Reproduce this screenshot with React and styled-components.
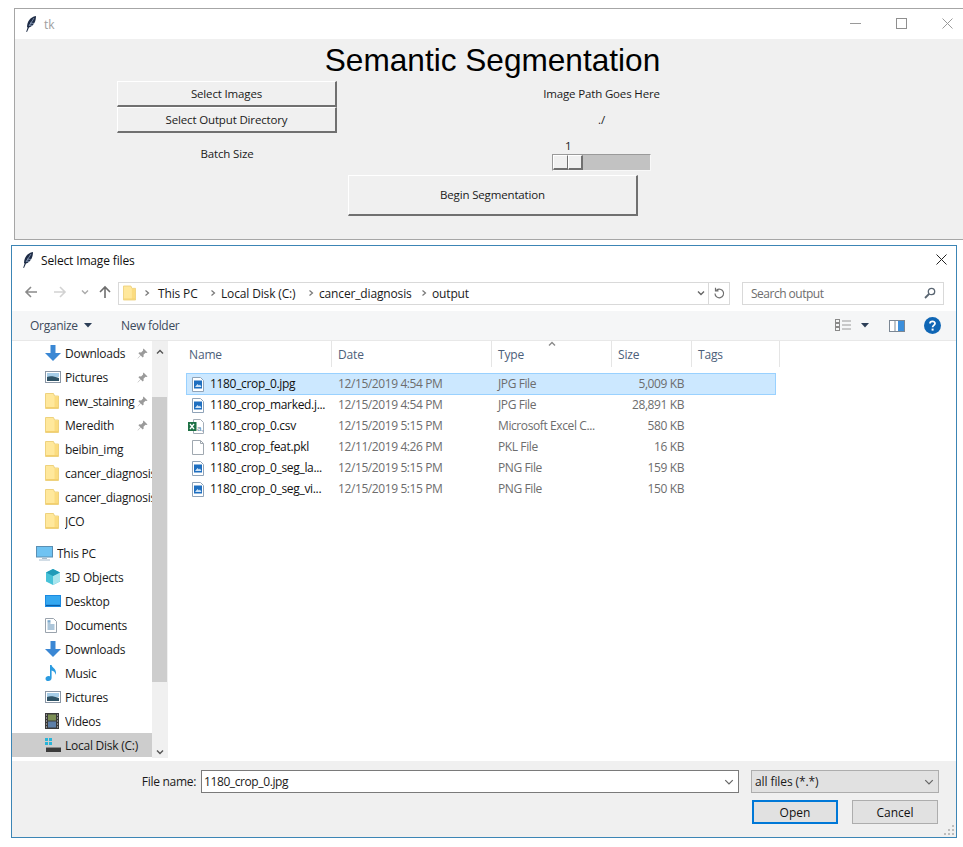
import React from "react";
import styled, { createGlobalStyle } from "styled-components";

const Global = createGlobalStyle`
  html, body { margin: 0; padding: 0; background: #fff; }
  body { width: 963px; height: 847px; overflow: hidden; font-family: "Open Sans", "Noto Sans", sans-serif; font-size: 12px; color: #1a1a1a; }
  * { box-sizing: border-box; }
`;

const Page = styled.div`
  width: 963px; height: 847px; padding-top: 8px; overflow: hidden; display: flex; flex-direction: column;
`;

/* ---------- Tk window ---------- */
const TkWindow = styled.section`
  margin-left: 14px; width: 949px; height: 232px; flex: none;
  border: 1px solid #a6a6a6; border-right: none; background: #f0f0f0; display: flex; flex-direction: column;
`;
const TkTitleBar = styled.header`
  height: 30px; background: #fff; display: flex; align-items: center; padding-left: 10px; flex: none;
`;
const TkTitleText = styled.span`
  margin-left: 7px; color: #a0a0a0; font-size: 12px;
`;
const WinButtons = styled.div`
  margin-left: auto; display: flex; align-items: center; gap: 35px; padding-right: ${(p) => p.$right}px; padding-bottom: 1px;
`;
const Heading = styled.h1`
  margin: 0; height: 42px; padding-left: 7px; flex: none; display: flex; align-items: center; justify-content: center;
  font: 400 31.6px "Liberation Sans", Arial, sans-serif; color: #000;
`;
const TkGrid = styled.div`
  display: grid; margin-left: 102px; grid-template-columns: 220px 215px 99px; grid-template-rows: 26px 26px 42px 41px;
`;
const TkButton = styled.button`
  appearance: none; margin: 0; padding: 0 0 1px; font: inherit; font-size: 11.5px; letter-spacing: -0.15px; color: #1a1a1a; background: #f0f0f0;
  border-style: solid; border-color: #fff #707070 #707070 #fff; border-width: 1px 2px 2px 1px;
  grid-column: ${(p) => p.$col || "1"}; grid-row: ${(p) => p.$row || "auto"};
  margin-left: ${(p) => p.$ml || "0"}; margin-right: ${(p) => p.$mr || "0"};
`;
const TkLabel = styled.div`
  grid-column: ${(p) => p.$col}; grid-row: ${(p) => p.$row}; justify-self: center; align-self: center; white-space: nowrap; font-size: 11.5px; letter-spacing: -0.15px; margin-bottom: 2px;
`;
const ScaleWrap = styled.div`
  grid-column: 3; grid-row: 3; align-self: end; padding-bottom: 4px; display: flex; flex-direction: column;
`;
const ScaleValue = styled.div`
  padding-left: 13px; line-height: 14px; height: 15px; font-size: 11.5px;
`;
const Trough = styled.div`
  height: 17px; background: #c2c2c2; border: 1px solid #f8f8f8; border-left-color: #9a9a9a; border-top-color: #9a9a9a; display: flex;
`;
const Thumb = styled.div`
  width: 15px; background: #f0f0f0; border-style: solid; border-color: #fff #707070 #707070 #fff; border-width: 1px 1px 2px 1px;
  &:last-child { border-right-width: 2px; }
`;

/* ---------- File dialog ---------- */
const Dialog = styled.section`
  margin: 5px 0 0 11px; width: 946px; height: 593px; flex: none; border: 1px solid #3c85b5; background: #fff;
  display: flex; flex-direction: column; position: relative;
`;
const DlgTitleBar = styled.header`
  height: 30px; flex: none; display: flex; align-items: center; padding: 0 0 2px 10px; color: #111;
`;
const DlgTitle = styled.span`
  margin-left: 7px; font-size: 12px; letter-spacing: -0.15px;
`;
const NavRow = styled.div`
  height: 35px; flex: none; display: flex; align-items: center; padding: 0 12px 1px 0;
`;
const NavIcons = styled.div`
  width: 106px; height: 22px; flex: none; display: flex; align-items: center; position: relative;
`;
const NavSlot = styled.span`
  position: absolute; left: ${(p) => p.$x}px; top: ${(p) => p.$y ?? 3}px; display: flex;
`;
const AddressBox = styled.div`
  width: 612px; height: 23px; border: 1px solid #d9d9d9; display: flex; align-items: center; flex: none;
`;
const Crumbs = styled.div`
  flex: 1; display: flex; align-items: center; padding-left: 4px; color: #1a1a1a; font-size: 12px; letter-spacing: -0.15px;
`;
const Crumb = styled.span`
  white-space: nowrap; width: ${(p) => p.$w}px;
`;
const Chev = styled.span`
  display: flex; width: ${(p) => p.$w || 16}px; justify-content: center; flex: none;
`;
const RefreshCell = styled.div`
  width: 21px; height: 100%; border-left: 1px solid #d9d9d9; display: flex; align-items: center; justify-content: center; flex: none;
`;
const SearchBox = styled.div`
  margin-left: 12px; width: 202px; height: 23px; border: 1px solid #d9d9d9; display: flex; align-items: center; justify-content: space-between;
  padding: 0 7px 0 8px; color: #6d6d6d; font-size: 12px; flex: none; letter-spacing: -0.5px;
`;
const Toolbar = styled.div`
  height: 30px; flex: none; background: #f5f6f7; border-bottom: 1px solid #e8e8e8; display: flex; align-items: center; padding: 0 15px 0 18px; color: #3c4a5c; font-size: 12px; letter-spacing: -0.3px;
`;
const ToolItem = styled.span`
  display: flex; align-items: center; gap: 6px; width: ${(p) => p.$w}px; flex: none; white-space: nowrap;
`;
const ToolRight = styled.div`
  margin-left: auto; display: flex; align-items: center;
`;
const ViewCaret = styled.span`
  width: 25px; display: flex; justify-content: center;
`;
const PreviewSlot = styled.span`
  margin: 0 19px 0 12px; display: flex;
`;
const Panes = styled.div`
  flex: 1; min-height: 0; display: flex;
`;
const Sidebar = styled.nav`
  width: 140px; flex: none; display: flex; flex-direction: column; overflow: hidden;
`;
const SideItem = styled.div`
  height: 24px; flex: none; display: flex; align-items: center; width: 140px; white-space: nowrap;
  padding-left: ${(p) => (p.$root ? 24 : 33)}px;
  margin-top: ${(p) => (p.$root ? 8 : 0)}px;
  background: ${(p) => (p.$active ? "#cdcdcd" : "transparent")};
  font-size: 12px; letter-spacing: -0.25px;
`;
const SideIcon = styled.span`
  width: ${(p) => (p.$root ? 21 : 20)}px; flex: none; display: flex; align-items: center;
`;
const SideLabel = styled.span`
  flex: 1; min-width: 0; overflow: hidden; color: #1a1a1a;
`;
const Pin = styled.span`
  flex: none; display: flex; margin-right: 4px; margin-left: 2px;
`;
const ScrollBar = styled.div`
  width: 16px; flex: none; background: #f0f0f0; height: 417px; display: flex; flex-direction: column; align-items: center;
`;
const ScrollArrow = styled.div`
  height: 17px; width: 100%; display: flex; align-items: center; justify-content: center; flex: none;
  padding-top: ${(p) => p.$pad || 0}px;
`;
const ScrollSpace = styled.div`
  height: ${(p) => p.$h}px; flex: none;
`;
const ScrollThumb = styled.div`
  width: 15px; height: 285px; background: #cdcdcd; flex: none; align-self: flex-start;
`;
const FileArea = styled.div`
  flex: 1; min-width: 0; display: flex; flex-direction: column; padding-left: 18px; position: relative;
`;
const HeaderRow = styled.div`
  height: 30px; flex: none; display: flex; color: #4c607a; font-size: 12px; letter-spacing: -0.15px;
`;
const HeaderCell = styled.div`
  width: ${(p) => p.$w}px; flex: none; padding: 1px 0 0 ${(p) => p.$pad || 6}px; border-right: 1px solid #e5e5e5; height: 26px; display: flex; align-items: center;
`;
const SortCaret = styled.span`
  position: absolute; left: 380px; top: -1px; display: flex;
`;
const Rows = styled.div`
  display: flex; flex-direction: column; margin-top: 2px;
`;
const FileRow = styled.div`
  height: 21px; width: 590px; flex: none; display: flex; align-items: center; font-size: 12px;
  border: 1px solid ${(p) => (p.$sel ? "#99d1ff" : "transparent")}; background: ${(p) => (p.$sel ? "#cce8ff" : "transparent")};
  &:first-child { height: 22px; }
`;
const FileIcon = styled.span`
  width: 23px; padding-left: ${(p) => p.$pad ?? 5}px; flex: none; display: flex;
`;
const FileName = styled.span`
  width: 128px; flex: none; color: #111; white-space: nowrap; letter-spacing: -0.32px; padding-bottom: 2px;
`;
const FileMeta = styled.span`
  width: ${(p) => p.$w}px; flex: none; color: #6d6d6d; white-space: nowrap; letter-spacing: -0.4px; padding-bottom: 2px; text-align: ${(p) => (p.$right ? "right" : "left")};
`;
const Footer = styled.footer`
  height: 76px; flex: none; background: #f0f0f0; position: relative; padding: 9px 17px 0 0; display: flex; flex-direction: column; margin-top: 3px;
`;
const FootRow = styled.div`
  display: flex; align-items: center; justify-content: flex-end;
`;
const FieldLabel = styled.label`
  margin-right: 5px; font-size: 12px; letter-spacing: -0.3px;
`;
const NameField = styled.div`
  width: 538px; height: 23px; background: #fff; border: 1px solid #7a7a7a; display: flex; align-items: center; justify-content: space-between; padding: 0 4px 0 1px; font-size: 12px; letter-spacing: -0.4px;
  span { padding-left: 1px; }
`;
const FilterField = styled.div`
  margin-left: 12px; width: 188px; height: 23px; background: #e1e1e1; border: 1px solid #adadad; display: flex; align-items: center; justify-content: space-between; padding: 0 4px 0 3px; font-size: 12px; letter-spacing: -0.1px;
`;
const Buttons = styled.div`
  display: flex; justify-content: flex-end; gap: 14px; margin-top: 7px; padding-right: 1px;
`;
const DlgButton = styled.button`
  appearance: none; margin: 0; padding: 0; width: 86px; height: 24px; font: inherit; font-size: 12px; color: #111; background: #e1e1e1;
  border: ${(p) => (p.$primary ? "2px solid #0078d7" : "1px solid #adadad")};
`;
const Grip = styled.span`
  position: absolute; right: 2px; bottom: 2px; display: flex;
`;
const NavDrop = styled.span`
  padding-top: 3px; display: flex;
`;

/* ---------- Icons ---------- */
const Feather = () => (
  <svg width="12" height="18" viewBox="0 0 12 18">
    <path d="M2 12C2 7 5 2 11 1c0 5-2 10-7 11.5L2 17l-.8-.3L2.6 12.5" fill="#1e2c46" />
    <path d="M4 11 9 3M5 8l4 .5M4.5 10l3 .5" stroke="#9fb2d0" strokeWidth=".7" fill="none" />
  </svg>
);
const MinIcon = () => (
  <svg width="11" height="11" viewBox="0 0 11 11"><path d="M0 5.5h11" stroke="#9a9a9a" /></svg>
);
const MaxIcon = () => (
  <svg width="11" height="11" viewBox="0 0 11 11"><rect x=".5" y=".5" width="10" height="10" fill="none" stroke="#8f8f8f" /></svg>
);
const CloseIcon = ({ c = "#9a9a9a", w = 1 }) => (
  <svg width="11" height="11" viewBox="0 0 11 11"><path d="M.5.5l10 10M10.5.5l-10 10" stroke={c} strokeWidth={w} /></svg>
);
const ArrowL = ({ c }) => (
  <svg width="14" height="14" viewBox="0 0 14 14"><path d="M13 7H2M7 2 2 7l5 5" stroke={c} strokeWidth="1.6" fill="none" /></svg>
);
const ArrowR = ({ c }) => (
  <svg width="14" height="14" viewBox="0 0 14 14"><path d="M1 7h11M7 2l5 5-5 5" stroke={c} strokeWidth="1.6" fill="none" /></svg>
);
const ArrowU = ({ c }) => (
  <svg width="14" height="14" viewBox="0 0 14 14"><path d="M7 13V2M2 7l5-5 5 5" stroke={c} strokeWidth="1.6" fill="none" /></svg>
);
const ChevDown = ({ c = "#777", s = 8, w = 1.4 }) => (
  <svg width={s} height={s} viewBox="0 0 8 8"><path d="M1 2.5 4 5.5l3-3" stroke={c} strokeWidth={w} fill="none" /></svg>
);
const ChevUp = ({ c = "#555" }) => (
  <svg width="8" height="8" viewBox="0 0 8 8"><path d="M1 5.5 4 2.5l3 3" stroke={c} strokeWidth="1.4" fill="none" /></svg>
);
const ChevRight = () => (
  <svg width="6" height="8" viewBox="0 0 6 8"><path d="M1.500 1.500 4.500 4l-3 2.500" stroke="#777" strokeWidth="1.2" fill="none" /></svg>
);
const Caret = () => (
  <svg width="8" height="5" viewBox="0 0 8 5"><path d="M0 0h8L4 4.500z" fill="#2c3e57" /></svg>
);
const Refresh = () => (
  <svg width="12" height="13" viewBox="0 0 12 13"><path d="M3.500 3.200A4.300 4.300 0 1 1 2 6.500M2.500.8v3h3" stroke="#6e6e6e" strokeWidth="1.2" fill="none" /></svg>
);
const Search = () => (
  <svg width="12" height="12" viewBox="0 0 12 12"><circle cx="7.500" cy="4.500" r="3.200" stroke="#5a6672" strokeWidth="1.3" fill="none" /><path d="M5 7 1 11" stroke="#5a6672" strokeWidth="1.8" /></svg>
);
const Folder = ({ s = 14 }) => (
  <svg width={s} height="16" viewBox="0 0 14 16">
    <path d="M.5.5h8l1 2.500h4v12.500H.5z" fill="#ffe89c" stroke="#eed27e" />
    <path d="M9.500 3.500h3.500v11.500H9.500z" fill="#fbdc80" />
    <path d="M1 14.500h12" stroke="#f3cf6e" />
  </svg>
);
const ViewsIcon = () => (
  <svg width="17" height="13" viewBox="0 0 17 13">
    <g fill="none" stroke="#8a8a8a"><rect x=".5" y=".5" width="4" height="3" /><rect x=".5" y="4.500" width="4" height="3" /><rect x=".5" y="8.500" width="4" height="3" /></g>
    <path d="M7 2h9M7 6h9M7 10h9" stroke="#9a9a9a" />
  </svg>
);
const PreviewIcon = () => (
  <svg width="16" height="12" viewBox="0 0 16 12">
    <rect x=".5" y=".5" width="15" height="11" fill="#fff" stroke="#7b8794" />
    <rect x="9" y="1" width="6" height="10" fill="#3c8fdc" />
    <path d="M6 1v10" stroke="#7b8794" />
  </svg>
);
const Help = () => (
  <svg width="17" height="17" viewBox="0 0 17 17">
    <circle cx="8.500" cy="8.500" r="8.500" fill="#0f66b5" />
    <path d="M6 6.600C6 3.600 11 3.600 11 6.500 11 8.400 8.600 8.400 8.600 10.200" stroke="#fff" strokeWidth="1.8" fill="none" />
    <rect x="7.600" y="11.600" width="2" height="2" fill="#fff" />
  </svg>
);
const PinIcon = () => (
  <svg width="11" height="11" viewBox="0 0 11 11">
    <path d="M6.500.5l4 4-1 .5-1-.2-2 2 .2 1.700-1 1-2-2L.8 10.400l-.2-.2 2.800-2.900-2-2 1-1 1.700.2 2-2-.1-1z" fill="#9a9a9a" />
  </svg>
);
const DownloadIcon = () => (
  <svg width="16" height="16" viewBox="0 0 16 16"><path d="M5.500 0h5v8H16l-8 8-8-8h5.500z" fill="#3a87d4" /></svg>
);
const PicturesIcon = () => (
  <svg width="16" height="12" viewBox="0 0 16 12">
    <rect x=".5" y=".5" width="15" height="11" fill="#fff" stroke="#8b97a6" />
    <rect x="2" y="2" width="12" height="4" fill="#a6cde8" />
    <path d="M2 6c3-1 6-1 12 1v3H2z" fill="#2f5366" />
  </svg>
);
const MonitorIcon = () => (
  <svg width="17" height="15" viewBox="0 0 17 15">
    <rect x=".5" y=".5" width="16" height="10.500" fill="#6fc3f2" stroke="#5a8fb3" />
    <path d="M6 12h5v1H6zM3 13.500h11v1H3z" fill="#a5bccd" />
  </svg>
);
const CubeIcon = () => (
  <svg width="16" height="16" viewBox="0 0 16 16">
    <path d="M8 0l7 3.500v9L8 16l-7-3.500v-9z" fill="#47c2d8" />
    <path d="M8 7l7-3.500v9L8 16z" fill="#a8e5ee" />
    <path d="M8 0l7 3.500L8 7 1 3.500z" fill="#1f9ab8" />
  </svg>
);
const DesktopIcon = () => (
  <svg width="16" height="12" viewBox="0 0 16 12">
    <rect width="16" height="12" fill="#1c8ae0" />
    <rect x="1" y="1" width="14" height="8.500" fill="#35a8f0" />
    <path d="M1 10.500h14" stroke="#0b5ea6" />
  </svg>
);
const DocsIcon = () => (
  <svg width="12" height="15" viewBox="0 0 12 15">
    <path d="M.5.5h8l3 3v11H.5z" fill="#fff" stroke="#9aa3ad" />
    <path d="M2.500 5h3M2.500 7h7M2.500 9h7M2.500 11h7" stroke="#5b8db5" />
    <rect x="2.500" y="2.200" width="3" height="2" fill="#7aa9cc" />
  </svg>
);
const MusicIcon = () => (
  <svg width="12" height="16" viewBox="0 0 12 16">
    <path d="M5 0h1.600c.3 2.500 4.400 3.600 4.400 7.500 0 .8-.2 1.600-.6 2.300.1-2.600-2-3.600-3.800-4.200V13c0 1.800-1.500 3-3.300 3C1.700 16 .5 15.100.5 13.700c0-1.600 1.500-2.700 3-2.700.6 0 1.100.1 1.500.4z" fill="#2b9be0" />
  </svg>
);
const VideoIcon = () => (
  <svg width="14" height="16" viewBox="0 0 14 16">
    <rect width="14" height="16" fill="#3a3a3a" />
    <rect x="3" y="1.500" width="8" height="6" fill="#7c8f55" />
    <rect x="3" y="8.500" width="8" height="6" fill="#5d7fa8" />
    <path d="M1 2h1M1 5h1M1 8h1M1 11h1M1 14h1M12 2h1M12 5h1M12 8h1M12 11h1M12 14h1" stroke="#ddd" />
  </svg>
);
const DiskIcon = () => (
  <svg width="16" height="15" viewBox="0 0 16 15">
    <path d="M0 0h3v3H0zM4 0h3v3H4zM0 4h3v3H0zM4 4h3v3H4z" fill="#28b4d8" />
    <rect x="1" y="10" width="15" height="4" fill="#3b3b3b" />
    <rect x="1" y="9" width="15" height="1" fill="#8a8a8a" />
  </svg>
);
const ImgFile = () => (
  <svg width="12" height="15" viewBox="0 0 12 15">
    <path d="M.5.5h8l3 3v11H.5z" fill="#fff" stroke="#8fa3b8" />
    <rect x="2" y="3.500" width="8" height="8" fill="#1f6fc0" />
    <path d="M3 10l2.500-3 1.500 1.500L8 7.500l1.500 2.500z" fill="#cfe4f7" />
  </svg>
);
const CsvIcon = () => (
  <svg width="16" height="15" viewBox="0 0 16 15">
    <path d="M5.500.5h7l3 3v11h-10z" fill="#fff" stroke="#a5aeb8" />
    <text x="9" y="12" fontSize="8" fontFamily="Liberation Sans" fill="#5a87a8">a,</text>
    <rect x="0" y="3" width="8.500" height="9" fill="#1e7145" />
    <path d="M2 5l4 5M6 5l-4 5" stroke="#fff" strokeWidth="1.300" />
  </svg>
);
const BlankFile = () => (
  <svg width="12" height="15" viewBox="0 0 12 15"><path d="M.5.5h8l3 3v11H.5z" fill="#fff" stroke="#a0a8b0" /><path d="M8.500.5v3h3" fill="none" stroke="#a0a8b0" /></svg>
);
const GripDots = () => (
  <svg width="10" height="10" viewBox="0 0 10 10" fill="#bdbdbd">
    <rect x="8" y="0" width="2" height="2" /><rect x="4" y="4" width="2" height="2" /><rect x="8" y="4" width="2" height="2" />
    <rect x="0" y="8" width="2" height="2" /><rect x="4" y="8" width="2" height="2" /><rect x="8" y="8" width="2" height="2" />
  </svg>
);

/* ---------- Data ---------- */
const quick = [
  { label: "Downloads", icon: <DownloadIcon />, pin: true },
  { label: "Pictures", icon: <PicturesIcon />, pin: true },
  { label: "new_staining", icon: <Folder />, pin: true },
  { label: "Meredith", icon: <Folder />, pin: true },
  { label: "beibin_img", icon: <Folder /> },
  { label: "cancer_diagnosis", icon: <Folder /> },
  { label: "cancer_diagnosis", icon: <Folder /> },
  { label: "JCO", icon: <Folder /> },
];
const pc = [
  { label: "3D Objects", icon: <CubeIcon /> },
  { label: "Desktop", icon: <DesktopIcon /> },
  { label: "Documents", icon: <DocsIcon /> },
  { label: "Downloads", icon: <DownloadIcon /> },
  { label: "Music", icon: <MusicIcon /> },
  { label: "Pictures", icon: <PicturesIcon /> },
  { label: "Videos", icon: <VideoIcon /> },
  { label: "Local Disk (C:)", icon: <DiskIcon />, active: true },
];
const files = [
  { name: "1180_crop_0.jpg", date: "12/15/2019 4:54 PM", type: "JPG File", size: "5,009 KB", icon: <ImgFile />, sel: true },
  { name: "1180_crop_marked.j...", date: "12/15/2019 4:54 PM", type: "JPG File", size: "28,891 KB", icon: <ImgFile /> },
  { name: "1180_crop_0.csv", date: "12/15/2019 5:15 PM", type: "Microsoft Excel C...", size: "580 KB", icon: <CsvIcon />, pad: 1 },
  { name: "1180_crop_feat.pkl", date: "12/11/2019 4:26 PM", type: "PKL File", size: "16 KB", icon: <BlankFile /> },
  { name: "1180_crop_0_seg_la...", date: "12/15/2019 5:15 PM", type: "PNG File", size: "159 KB", icon: <ImgFile /> },
  { name: "1180_crop_0_seg_vi...", date: "12/15/2019 5:15 PM", type: "PNG File", size: "150 KB", icon: <ImgFile /> },
];

const SideRow = ({ item }) => (
  <SideItem $active={item.active}>
    <SideIcon>{item.icon}</SideIcon>
    <SideLabel>{item.label}</SideLabel>
    {item.pin && <Pin><PinIcon /></Pin>}
  </SideItem>
);

export default function App() {
  return (
    <Page>
      <Global />
      <TkWindow>
        <TkTitleBar>
          <Feather />
          <TkTitleText>tk</TkTitleText>
          <WinButtons $right={10}><MinIcon /><MaxIcon /><CloseIcon /></WinButtons>
        </TkTitleBar>
        <Heading>Semantic Segmentation</Heading>
        <TkGrid>
          <TkButton $row="1">Select Images</TkButton>
          <TkLabel $col="3" $row="1">Image Path Goes Here</TkLabel>
          <TkButton $row="2">Select Output Directory</TkButton>
          <TkLabel $col="3" $row="2">./</TkLabel>
          <TkLabel $col="1" $row="3">Batch Size</TkLabel>
          <ScaleWrap>
            <ScaleValue>1</ScaleValue>
            <Trough><Thumb /><Thumb /></Trough>
          </ScaleWrap>
          <TkButton $col="1 / 4" $row="4" $ml="231px" $mr="13px">Begin Segmentation</TkButton>
        </TkGrid>
      </TkWindow>

      <Dialog>
        <DlgTitleBar>
          <Feather />
          <DlgTitle>Select Image files</DlgTitle>
          <WinButtons $right={9}><CloseIcon c="#222" /></WinButtons>
        </DlgTitleBar>
        <NavRow>
          <NavIcons>
            <NavSlot $x={12}><ArrowL c="#8a8a8a" /></NavSlot>
            <NavSlot $x={41}><ArrowR c="#d2d2d2" /></NavSlot>
            <NavSlot $x={69}><NavDrop><ChevDown c="#aaa" /></NavDrop></NavSlot>
            <NavSlot $x={86}><ArrowU c="#6e6e6e" /></NavSlot>
          </NavIcons>
          <AddressBox>
            <Crumbs>
              <Folder s={13} />
              <Chev $w={22}><ChevRight /></Chev>
              <Crumb $w={47}>This PC</Crumb>
              <Chev $w={16}><ChevRight /></Chev>
              <Crumb $w={82}>Local Disk (C:)</Crumb>
              <Chev $w={16}><ChevRight /></Chev>
              <Crumb $w={97}>cancer_diagnosis</Crumb>
              <Chev $w={16}><ChevRight /></Chev>
              <Crumb $w={40}>output</Crumb>
            </Crumbs>
            <Chev $w={14}><ChevDown c="#666" /></Chev>
            <RefreshCell><Refresh /></RefreshCell>
          </AddressBox>
          <SearchBox><span>Search output</span><Search /></SearchBox>
        </NavRow>
        <Toolbar>
          <ToolItem $w={91}>Organize <Caret /></ToolItem>
          <ToolItem $w={70}>New folder</ToolItem>
          <ToolRight>
            <ViewsIcon />
            <ViewCaret><Caret /></ViewCaret>
            <PreviewSlot><PreviewIcon /></PreviewSlot>
            <Help />
          </ToolRight>
        </Toolbar>
        <Panes>
          <Sidebar>
            {quick.map((q, i) => <SideRow key={i} item={q} />)}
            <SideItem $root>
              <SideIcon $root><MonitorIcon /></SideIcon>
              <SideLabel>This PC</SideLabel>
            </SideItem>
            {pc.map((q, i) => <SideRow key={i} item={q} />)}
          </Sidebar>
          <ScrollBar>
            <ScrollArrow $pad={4}><ChevUp /></ScrollArrow>
            <ScrollSpace $h={39} />
            <ScrollThumb />
            <ScrollSpace $h={59} />
            <ScrollArrow $pad={4}><ChevDown c="#555" /></ScrollArrow>
          </ScrollBar>
          <FileArea>
            <SortCaret><ChevUp c="#8a8a8a" /></SortCaret>
            <HeaderRow>
              <HeaderCell $w={146} $pad={3}>Name</HeaderCell>
              <HeaderCell $w={160}>Date</HeaderCell>
              <HeaderCell $w={120}>Type</HeaderCell>
              <HeaderCell $w={80}>Size</HeaderCell>
              <HeaderCell $w={88}>Tags</HeaderCell>
            </HeaderRow>
            <Rows>
              {files.map((f) => (
                <FileRow key={f.name} $sel={f.sel}>
                  <FileIcon $pad={f.pad}>{f.icon}</FileIcon>
                  <FileName>{f.name}</FileName>
                  <FileMeta $w={160}>{f.date}</FileMeta>
                  <FileMeta $w={105}>{f.type}</FileMeta>
                  <FileMeta $w={81} $right>{f.size}</FileMeta>
                </FileRow>
              ))}
            </Rows>
          </FileArea>
        </Panes>
        <Footer>
          <FootRow>
            <FieldLabel>File name:</FieldLabel>
            <NameField><span>1180_crop_0.jpg</span><ChevDown c="#666" s={10} w={1} /></NameField>
            <FilterField><span>all files (*.*)</span><ChevDown c="#666" s={10} w={1} /></FilterField>
          </FootRow>
          <Buttons>
            <DlgButton $primary>Open</DlgButton>
            <DlgButton>Cancel</DlgButton>
          </Buttons>
          <Grip><GripDots /></Grip>
        </Footer>
      </Dialog>
    </Page>
  );
}
